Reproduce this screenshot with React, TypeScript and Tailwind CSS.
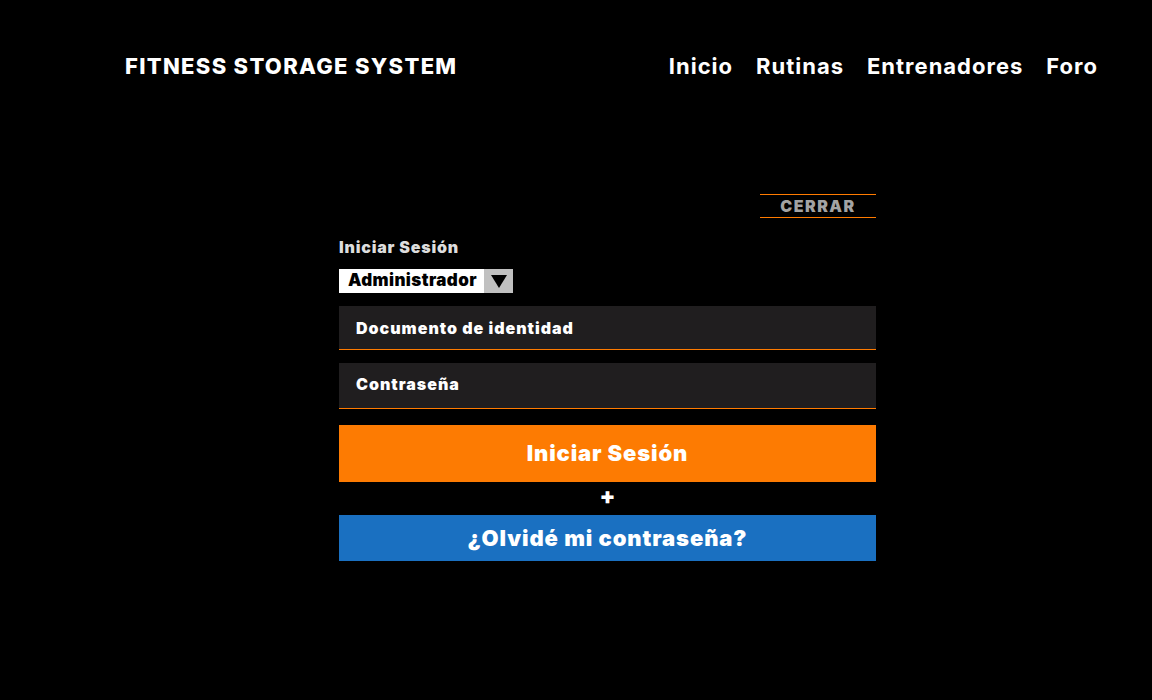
import React from "react";

export default function App() {
  return (
    <div className="min-h-[700px] w-full bg-black text-white" style={{ fontFamily: "Inter, 'Liberation Sans', sans-serif" }}>
      <header className="flex items-center justify-between pl-[125px] pr-[54px] pt-[52px]">
        <div className="text-[22px] font-extrabold leading-[28px] tracking-[1.3px]">FITNESS STORAGE SYSTEM</div>
        <nav className="flex gap-[23px] text-[22px] font-bold leading-[28px] tracking-[1px]">
          <a>Inicio</a>
          <a>Rutinas</a>
          <a>Entrenadores</a>
          <a>Foro</a>
        </nav>
      </header>
      <main className="ml-[339px] mt-[114px] flex w-[537px] flex-col font-black">
        <div className="flex justify-end">
          <button className="h-[24px] w-[116px] border-y border-[#ff7b00] text-[16px] leading-[20px] tracking-[1.5px] text-[#a3a3a3]">CERRAR</button>
        </div>
        <div className="mt-[19px] text-[16px] leading-[20px] tracking-[0.8px] text-[#dddddd]">Iniciar Sesión</div>
        <div className="mt-[12px] flex h-[24px] w-[174px] items-stretch bg-white text-black">
          <span className="flex flex-1 items-center pl-[9px] text-[17px] tracking-[0.4px]">Administrador</span>
          <span className="flex w-[29px] items-center justify-center bg-[#c0c0c0]">
            <svg width="16" height="14" viewBox="0 0 16 14"><polygon points="0,1 16,1 8,14" fill="#000" /></svg>
          </span>
        </div>
        <div className="mt-[13px] flex h-[44px] items-center border-b border-[#ff7b00] bg-[#201e1f] pl-[17px] text-[16px] tracking-[1px]">Documento de identidad</div>
        <div className="mt-[13px] flex h-[46px] items-center border-b border-[#ff7b00] bg-[#201e1f] pb-[4px] pl-[17px] text-[16px] tracking-[1px]">Contraseña</div>
        <button className="mt-[16px] h-[57px] bg-[#fd7b02] text-[22px] tracking-[0.85px] text-white">Iniciar Sesión</button>
        <div className="flex h-[33px] items-center justify-center pb-[4px] text-[23px] leading-none">+</div>
        <button className="h-[46px] bg-[#1a70c1] text-[22px] tracking-[0.9px] text-white">¿Olvidé mi contraseña?</button>
      </main>
    </div>
  );
}
